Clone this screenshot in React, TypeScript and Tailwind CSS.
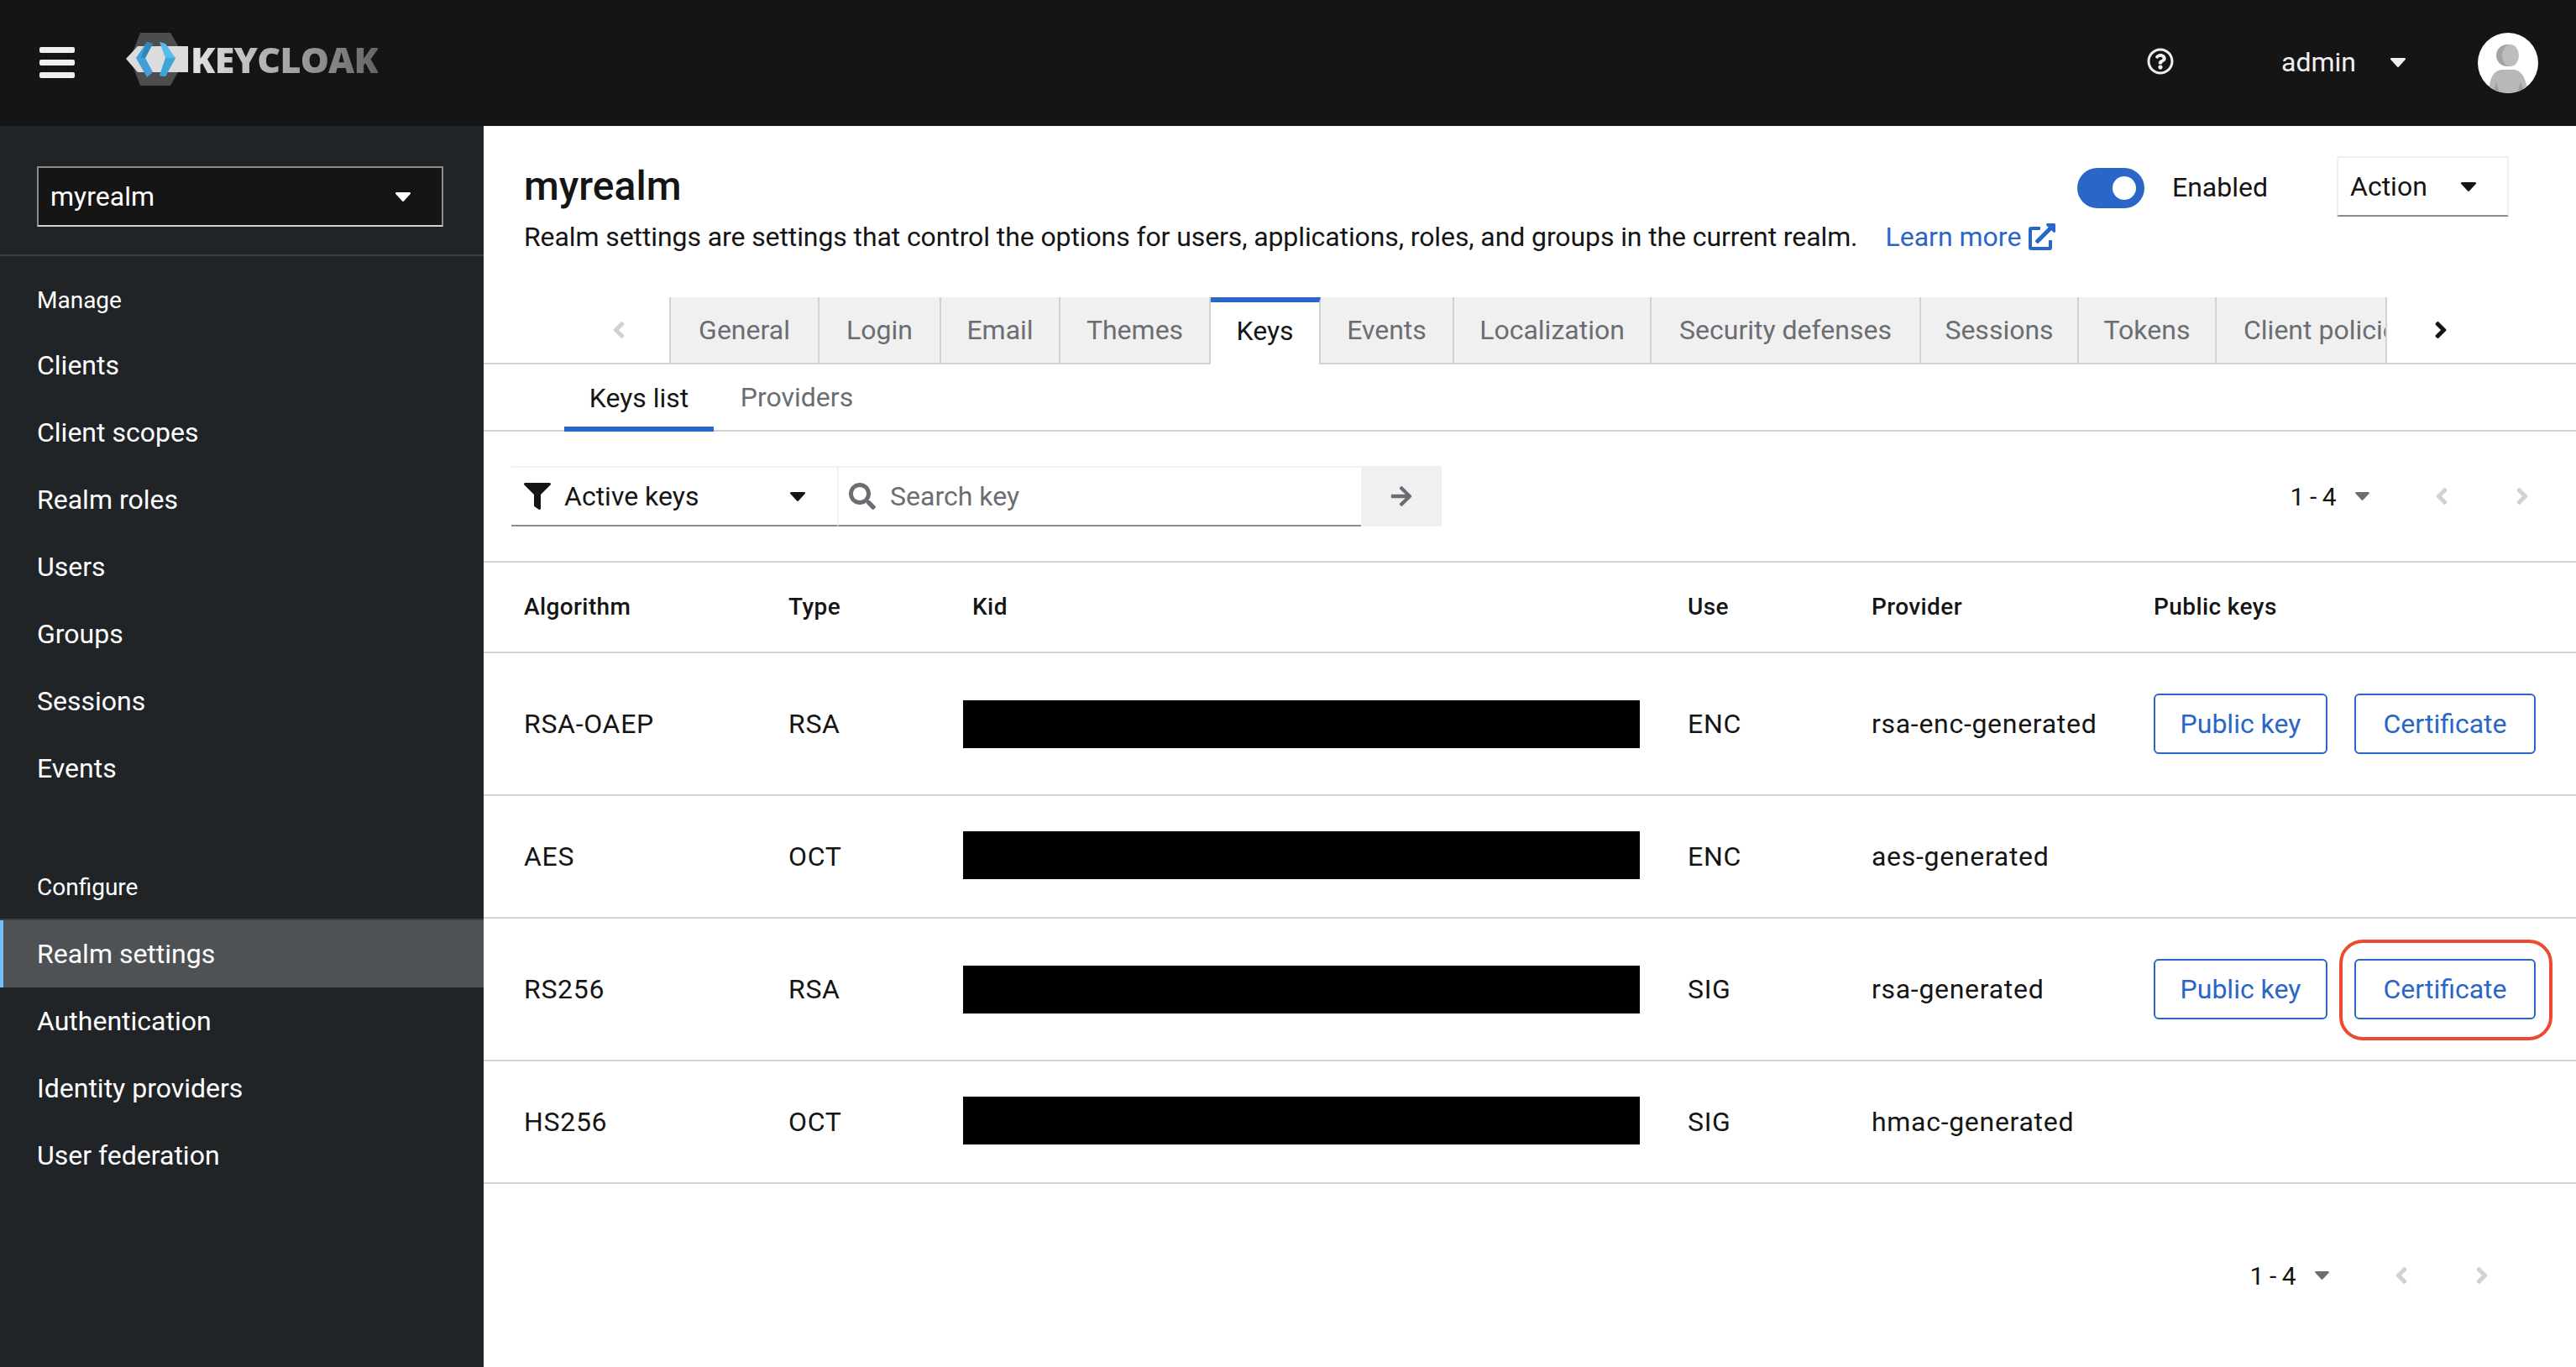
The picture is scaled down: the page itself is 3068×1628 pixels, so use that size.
import React from 'react';
import { FaAngleLeft, FaAngleRight, FaArrowRight, FaExternalLinkAlt, FaFilter, FaRegQuestionCircle, FaSearch } from 'react-icons/fa';

const manageItems = ['Clients', 'Client scopes', 'Realm roles', 'Users', 'Groups', 'Sessions', 'Events'];
const configureItems = ['Realm settings', 'Authentication', 'Identity providers', 'User federation'];

const tabs = [
    { label: 'General', width: 'w-[177px]' },
    { label: 'Login', width: 'w-[145px]' },
    { label: 'Email', width: 'w-[142px]' },
    { label: 'Themes', width: 'w-[179px]' },
    { label: 'Keys', width: 'w-[131px]', active: true },
    { label: 'Events', width: 'w-[159px]' },
    { label: 'Localization', width: 'w-[235px]' },
    { label: 'Security defenses', width: 'w-[321px]' },
    { label: 'Sessions', width: 'w-[188px]' },
    { label: 'Tokens', width: 'w-[164px]' },
];

const rows = [
    { algorithm: 'RSA-OAEP', type: 'RSA', use: 'ENC', provider: 'rsa-enc-generated', buttons: true },
    { algorithm: 'AES', type: 'OCT', use: 'ENC', provider: 'aes-generated' },
    { algorithm: 'RS256', type: 'RSA', use: 'SIG', provider: 'rsa-generated', buttons: true, highlight: true },
    { algorithm: 'HS256', type: 'OCT', use: 'SIG', provider: 'hmac-generated' },
];

const gridCols = 'grid grid-cols-[315px_219px_852px_219px_336px_1fr] items-center pl-[48px]';

const Caret = ({ className }: { className: string }) => (
    <svg viewBox="0 0 20 12" className={className} fill="currentColor">
        <path d="M1.5 0h17c1.2 0 1.8 1.4 1 2.300l-8.500 9.200c-.6.600-1.400.600-2 0L.5 2.300C-.3 1.400.3 0 1.500 0z" />
    </svg>
);

const Logo = () => (
    <div className="mb-[9px] flex w-[304px] items-center">
        <svg viewBox="0 0 76 64" className="h-[64px] w-[76px] shrink-0">
            <polygon points="17,0 53,0 71,31 53,63 17,63 5,31" fill="#4d4d4d" />
            <polygon points="0,31 14,16 74,16 74,47 14,47" fill="#dcdcdc" />
            <polygon points="25,11 32,13 23,30 32,47 25,53 12,30" fill="#3f9fd6" />
            <polygon points="25,11 32,13 23,30 18,30" fill="#2f86bb" />
            <polygon points="40,11 47,13 59,30 47,52 40,51 47,30" fill="#55bdea" />
            <polygon points="47,30 59,30 47,52 40,51" fill="#3fa4d8" />
        </svg>
        <span className="ml-[1px] bg-gradient-to-r from-[#e4e4e4] via-[#a8a8a8] to-[#656565] bg-clip-text font-['Open_Sans',sans-serif] text-[43px] leading-[50px] font-extrabold tracking-[-0.8px] text-transparent">
            KEYCLOAK
        </span>
    </div>
);

const Avatar = () => (
    <svg viewBox="0 0 72 72" className="h-[72px] w-[72px]">
        <defs>
            <clipPath id="avatarClip">
                <circle cx="36" cy="36" r="36" />
            </clipPath>
        </defs>
        <circle cx="36" cy="36" r="36" fill="#ffffff" />
        <g clipPath="url(#avatarClip)">
            <circle cx="35" cy="27" r="13" fill="#a3a3a3" />
            <ellipse cx="39" cy="27" rx="10" ry="13" fill="#bdbdbd" />
            <path d="M13 72C14 54 18 46 28 44h16c9 2 13 10 16 28z" fill="#b8b8b8" />
            <path d="M22 58l4 14h-8zM51 58l-4 14h9z" fill="#a0a0a0" />
        </g>
    </svg>
);

const Pagination = () => (
    <div className="flex items-center">
        <span className="text-[30px] tracking-[-0.5px] text-[#151515]">1 - 4</span>
        <Caret className="ml-[23px] h-[10px] w-[17px] text-[#6a6e73]" />
        <div className="ml-[38px] flex">
            <div className="flex h-[72px] w-[96px] items-center justify-center text-[#d2d2d2]">
                <FaAngleLeft size={32} />
            </div>
            <div className="flex h-[72px] w-[96px] items-center justify-center text-[#d2d2d2]">
                <FaAngleRight size={32} />
            </div>
        </div>
    </div>
);

const KeyButton = ({ label, width }: { label: string; width: string }) => (
    <button className={`h-[72px] rounded-[6px] border-2 border-[#2a65c8] text-[32px] tracking-normal text-[#2a65c8] ${width}`}>{label}</button>
);

const NavItem = ({ label, active }: { label: string; active?: boolean }) => (
    <div
        className={`flex h-[80px] items-center text-[32px] text-white ${
            active ? 'border-l-[4px] border-[#73bcf7] bg-[#4f5255] pl-[40px]' : 'pl-[44px]'
        }`}
    >
        {label}
    </div>
);

export default function App() {
    return (
        <div className="flex h-[1628px] w-[3068px] flex-col overflow-hidden bg-white font-['Roboto',sans-serif] text-[#151515]">
            <header className="flex h-[150px] shrink-0 items-center bg-[#151515]">
                <svg viewBox="0 0 42 37" className="mb-[2px] ml-[47px] h-[37px] w-[42px]" fill="#f0f0f0">
                    <rect y="0" width="42" height="7" rx="2" />
                    <rect y="15" width="42" height="7" rx="2" />
                    <rect y="30" width="42" height="7" rx="2" />
                </svg>
                <div className="ml-[61px]">
                    <Logo />
                </div>
                <FaRegQuestionCircle size={32} className="mb-[5px] ml-[2103px] text-[#f0f0f0]" />
                <span className="mb-[2px] ml-[128px] text-[32px] text-[#f0f0f0]">admin</span>
                <Caret className="mb-[2px] ml-[40px] h-[11px] w-[20px] text-[#f0f0f0]" />
                <div className="ml-[85px]">
                    <Avatar />
                </div>
            </header>

            <div className="flex min-h-0 flex-1">
                <aside className="w-[576px] shrink-0 bg-[#212427]">
                    <div className="border-b-2 border-[#3c3f42] pt-[48px] pb-[33px]">
                        <div className="ml-[44px] flex h-[72px] w-[484px] items-center justify-between border-2 border-[#8a8d90] border-b-[#d2d2d2] bg-[#151515] pr-[36px] pl-[14px]">
                            <span className="text-[32px] text-white">myrealm</span>
                            <Caret className="h-[11px] w-[20px] text-white" />
                        </div>
                    </div>
                    <div className="flex h-[90px] items-center pt-4 pl-[44px] text-[28px] text-white">Manage</div>
                    {manageItems.map((item) => (
                        <NavItem key={item} label={item} />
                    ))}
                    <div className="flex h-[141px] items-center border-b-2 border-[#3c3f42] pt-[65px] pl-[44px] text-[28px] text-white">Configure</div>
                    {configureItems.map((item, i) => (
                        <NavItem key={item} label={item} active={i === 0} />
                    ))}
                </aside>

                <main className="min-w-0 flex-1">
                    <div className="flex h-[204px] items-start justify-between pr-[80px] pl-[48px]">
                        <div>
                            <h1 className="mt-[42px] text-[48px] leading-[60px] font-medium">myrealm</h1>
                            <div className="mt-[6px] flex items-center text-[32px] leading-[48px]">
                                <span className="tracking-[-0.1px]">Realm settings are settings that control the options for users, applications, roles, and groups in the current realm.</span>
                                <span className="ml-[33px] text-[#2a65c8]">Learn more</span>
                                <FaExternalLinkAlt size={32} className="ml-[9px] text-[#2a65c8]" />
                            </div>
                        </div>
                        <div className="mt-[36px] flex h-[72px] items-center">
                            <div className="mt-1 flex h-[48px] w-[80px] items-center justify-end rounded-full bg-[#2a65c8] pr-[10px]">
                                <div className="h-[28px] w-[28px] rounded-full bg-white" />
                            </div>
                            <span className="mt-[2px] ml-[33px] text-[32px]">Enabled</span>
                            <div className="ml-[82px] flex h-[72px] w-[205px] items-center justify-between border-2 border-[#f0f0f0] border-b-[#8a8d90] pr-[36px] pl-[14px]">
                                <span className="text-[32px]">Action</span>
                                <Caret className="h-[11px] w-[20px] text-[#151515]" />
                            </div>
                        </div>
                    </div>

                    <div className="flex h-[80px] items-start border-b-2 border-[#d2d2d2]">
                        <div className="flex h-[78px] w-[221px] shrink-0 items-center justify-end pr-[44px] text-[#d2d2d2]">
                            <FaAngleLeft size={32} />
                        </div>
                        <div className="flex border-l-2 border-[#d2d2d2]">
                            {tabs.map((tab) =>
                                tab.active ? (
                                    <div
                                        key={tab.label}
                                        className={`z-10 -mb-[2px] flex h-[80px] items-center justify-center border-t-[6px] border-r-2 border-t-[#2a65c8] border-r-[#d2d2d2] bg-white pb-[6px] text-[32px] text-[#151515] ${tab.width}`}
                                    >
                                        {tab.label}
                                    </div>
                                ) : (
                                    <div
                                        key={tab.label}
                                        className={`flex h-[78px] items-center justify-center border-r-2 border-[#d2d2d2] bg-[#f0f0f0] text-[32px] text-[#6a6e73] ${tab.width}`}
                                    >
                                        {tab.label}
                                    </div>
                                ),
                            )}
                            <div className="flex h-[78px] w-[203px] items-center overflow-hidden border-r-2 border-[#d2d2d2] bg-[#f0f0f0] pl-[32px] text-[32px] whitespace-nowrap text-[#6a6e73]">
                                Client policies
                            </div>
                        </div>
                        <div className="ml-[48px] flex h-[78px] items-center">
                            <FaAngleRight size={32} />
                        </div>
                    </div>

                    <div className="flex h-[80px] items-start border-b-2 border-[#d2d2d2] pl-[96px]">
                        <div className="z-10 flex h-[80px] w-[178px] items-center justify-center border-b-[6px] border-[#2a65c8] pt-[6px] text-[32px]">Keys list</div>
                        <div className="flex h-[78px] w-[198px] items-center justify-center text-[32px] text-[#6a6e73]">Providers</div>
                    </div>

                    <div className="mt-[41px] flex items-center justify-between pr-[16px] pl-[33px]">
                        <div className="flex h-[72px]">
                            <div className="flex w-[388px] items-center border-t-2 border-b-2 border-t-[#f0f0f0] border-b-[#8a8d90] pl-[15px]">
                                <FaFilter size={32} />
                                <span className="ml-[16px] text-[32px]">Active keys</span>
                                <Caret className="mr-[37px] ml-auto h-[11px] w-[20px] text-[#151515]" />
                            </div>
                            <div className="flex w-[624px] items-center border-t-2 border-b-2 border-l-2 border-t-[#f0f0f0] border-b-[#8a8d90] border-l-[#f0f0f0] pl-[12px] text-[#6a6e73]">
                                <FaSearch size={32} />
                                <span className="ml-[17px] text-[32px]">Search key</span>
                            </div>
                            <div className="flex w-[96px] items-center justify-center bg-[#f0f0f0] text-[#6a6e73]">
                                <FaArrowRight size={28} />
                            </div>
                        </div>
                        <Pagination />
                    </div>

                    <div className="mt-[41px] border-t-2 border-[#d2d2d2]">
                        <div className={`${gridCols} h-[108px] border-b-2 border-[#d2d2d2] text-[28px] font-medium tracking-[0.4px]`}>
                            <span>Algorithm</span>
                            <span>Type</span>
                            <span>Kid</span>
                            <span>Use</span>
                            <span>Provider</span>
                            <span>Public keys</span>
                        </div>
                        {rows.map((row) => (
                            <div
                                key={row.algorithm}
                                className={`${gridCols} ${row.buttons ? 'h-[170px]' : 'h-[146px]'} border-b-2 border-[#d2d2d2] text-[32px] tracking-[0.7px]`}
                            >
                                <span>{row.algorithm}</span>
                                <span>{row.type}</span>
                                <div className={`-ml-[11px] h-[57px] w-[806px] bg-black ${row.buttons ? '' : 'mb-[3px]'}`} />
                                <span>{row.use}</span>
                                <span>{row.provider}</span>
                                {row.buttons ? (
                                    <div className="flex gap-[32px]">
                                        <KeyButton label="Public key" width="w-[207px]" />
                                        <div className="relative">
                                            <KeyButton label="Certificate" width="w-[216px]" />
                                            {row.highlight && (
                                                <div className="absolute -top-[23px] -right-[20px] -bottom-[25px] -left-[18px] rounded-[28px] border-[4px] border-[#ee4a2f]" />
                                            )}
                                        </div>
                                    </div>
                                ) : (
                                    <span />
                                )}
                            </div>
                        ))}
                    </div>

                    <div className="mt-[73px] flex justify-end pr-[64px]">
                        <Pagination />
                    </div>
                </main>
            </div>
        </div>
    );
}
